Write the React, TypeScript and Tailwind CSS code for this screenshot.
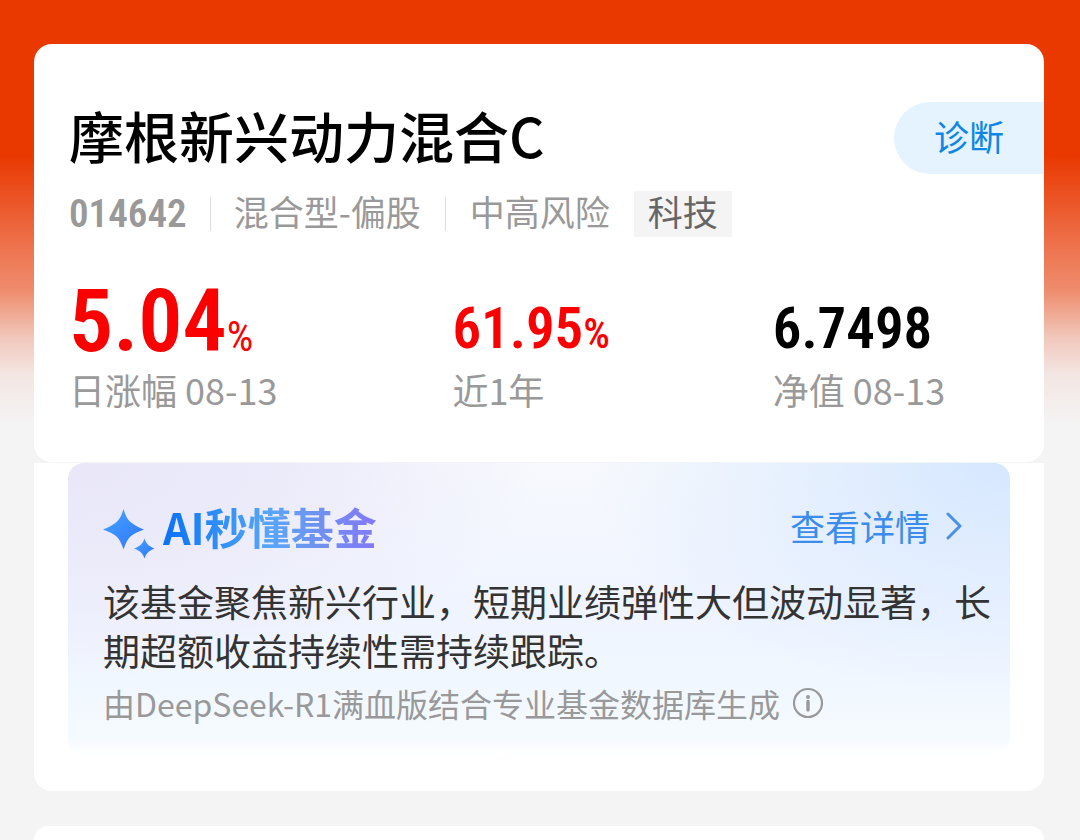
const stats = [
  { label: "近1年", value: "61.95", unit: "%", color: "text-[#fb0000]" },
  { label: "净值 08-13", value: "6.7498", unit: "", color: "text-black" },
];

function Sparkles() {
  return (
    <svg viewBox="0 0 52 50" className="mt-2.5 h-[50px] w-[52px] shrink-0" aria-hidden="true">
      <defs>
        <linearGradient id="spark" x1="0" y1="0" x2="1" y2="1">
          <stop offset="0" stopColor="#46a5ff" />
          <stop offset="1" stopColor="#2f74fb" />
        </linearGradient>
      </defs>
      <path
        d="M20.500 0C22.500 7 25 11.500 28 13.500C31 16 36 18.500 41 20.500C36 22.500 31 24.500 28 27C25 29.500 22.500 34 20.500 40.500C18.500 34 16 29.500 13 27C10 24.500 5 22.500 0 20.500C5 18.500 10 16 13 13.500C16 11 18.500 7 20.500 0Z"
        fill="url(#spark)"
      />
      <path
        d="M41.500 29.500C43 34 44.500 36.500 51.500 39.500C44.500 42.500 43 45 41.500 49.500C40 45 38.500 42.500 31 39.500C38.500 36.500 40 34 41.500 29.500Z"
        fill="url(#spark)"
      />
    </svg>
  );
}

function InfoIcon() {
  return (
    <svg viewBox="0 0 32 32" className="size-8" fill="none" aria-hidden="true">
      <circle cx="16" cy="16" r="14" stroke="#999" strokeWidth="2.200" />
      <circle cx="16" cy="10" r="2" fill="#999" />
      <path d="M16 14.500V23" stroke="#999" strokeWidth="3.400" strokeLinecap="round" />
    </svg>
  );
}

export default function App() {
  return (
    <main className="flex min-h-screen flex-col bg-[#f4f4f4] bg-[linear-gradient(180deg,#e93800_0px,#e93800_155px,#ee7854_255px,#ee8c6c_290px,#f1c8bc_338px,#f3e6e3_375px,#f4f4f4_425px)] pr-9 pl-[34px] pt-11 font-['Noto_Sans_CJK_SC',sans-serif]">
      <section className="rounded-[18px] bg-white pt-[58px] pb-[49px]">
        <div className="flex items-start justify-between pl-[35px]">
          <h1 className="text-[55px] leading-[64px] font-medium text-black">摩根新兴动力混合C</h1>
          <button type="button" className="h-[72px] rounded-l-full bg-[#e5f3ff] px-10 pb-1 text-[35px] text-[#0e86e4]">
            诊断
          </button>
        </div>

        <div className="mt-[17px] flex h-[46px] items-start pl-[35px] text-[35px] leading-[40px] whitespace-nowrap text-[#999]">
          <span className="self-center font-['Roboto_Condensed','Noto_Sans_CJK_SC',sans-serif] text-[39px] font-semibold">014642</span>
          <span className="mx-[23px] h-[34px] w-px self-center bg-[#ddd]" />
          <span>混合型-偏股</span>
          <span className="mx-6 h-[34px] w-px self-center bg-[#ddd]" />
          <span>中高风险</span>
          <span className="ml-6 h-[46px] bg-[#f4f4f4] px-3.5 text-[#666]">科技</span>
        </div>

        <dl className="mt-11 grid grid-cols-[383fr_320fr_271fr] items-end pl-[35px]">
          <div className="flex flex-col-reverse gap-1">
            <dt className="text-[36px] leading-[48px] text-[#999]">日涨幅 08-13</dt>
            <dd className="flex items-baseline font-['Roboto_Condensed','Noto_Sans_CJK_SC',sans-serif] text-[#fb0000]">
              <span className="text-[88px] leading-[80px] font-semibold">5.04</span>
              <span className="text-[42px] leading-none">%</span>
            </dd>
          </div>
          {stats.map((s) => (
            <div key={s.label} className="flex flex-col-reverse gap-1">
              <dt className="text-[36px] leading-[48px] text-[#999]">{s.label}</dt>
              <dd className={`flex items-baseline font-['Roboto_Condensed','Noto_Sans_CJK_SC',sans-serif] ${s.color}`}>
                <span className="text-[57px] leading-[64px] font-semibold">{s.value}</span>
                <span className="text-[42px] leading-none font-medium">{s.unit}</span>
              </dd>
            </div>
          ))}
        </dl>
      </section>

      <section className="mt-px rounded-b-[18px] bg-white px-[34px] pb-9">
        <div className="rounded-2xl bg-[linear-gradient(180deg,transparent_94%,#ffffff_100%),radial-gradient(ellipse_45%_80%_at_100%_0%,#d5e7ff_0%,transparent_100%),radial-gradient(ellipse_50%_75%_at_0%_0%,#e9e7f8_0%,#ecebfa_45%,transparent_100%),linear-gradient(180deg,#f7f9fd_0%,#eff4ff_50%,#f1f7ff_75%,#f5faff_92%)] pt-9 pr-4 pb-[29px] pl-[35px]">
          <div className="flex items-start justify-between pr-8">
            <h2 className="flex items-start gap-2">
              <Sparkles />
              <span className="bg-[linear-gradient(90deg,#0a72f8_0%,#2c8cf8_24%,#58a6f8_50%,#6f92f0_72%,#8378f8_100%)] bg-clip-text text-[43px] leading-[54px] font-bold text-transparent">
                AI秒懂基金
              </span>
            </h2>
            <a href="#detail" className="flex items-center gap-4 text-[35px] leading-[54px] text-[#3b8cec]">
              查看详情
              <svg viewBox="0 0 16 28" className="h-7 w-4" fill="none" aria-hidden="true">
                <path d="M2 2L14 14L2 26" stroke="#4a90e6" strokeWidth="3" strokeLinecap="round" strokeLinejoin="round" />
              </svg>
            </a>
          </div>
          <p className="mt-[18px] text-[37px] leading-[49px] text-[#333]">
            该基金聚焦新兴行业，短期业绩弹性大但波动显著，长期超额收益持续性需持续跟踪。
          </p>
          <div className="mt-[5px] flex items-center gap-3 text-[32px] leading-[46px] text-[#999]">
            <span>由DeepSeek-R1满血版结合专业基金数据库生成</span>
            <button type="button" aria-label="说明">
              <InfoIcon />
            </button>
          </div>
        </div>
      </section>

      <section className="mt-[35px] flex-1 rounded-t-3xl bg-white" />
    </main>
  );
}
